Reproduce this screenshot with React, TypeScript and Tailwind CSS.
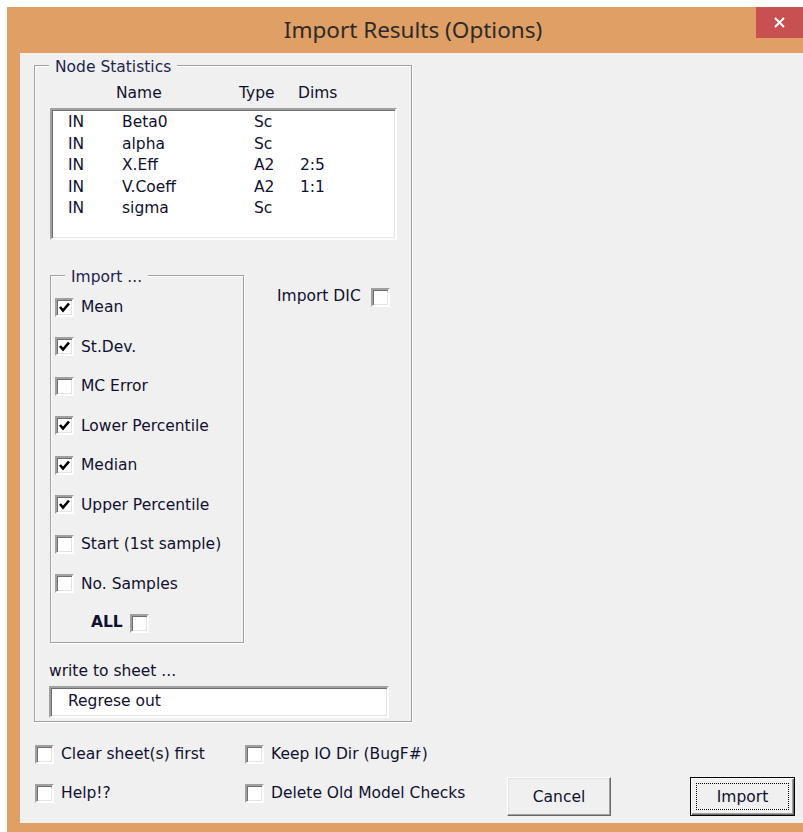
import type { ReactNode } from 'react';

type Node = { io: string; name: string; type: string; dims: string };

const nodes: Node[] = [
  { io: 'IN', name: 'Beta0', type: 'Sc', dims: '' },
  { io: 'IN', name: 'alpha', type: 'Sc', dims: '' },
  { io: 'IN', name: 'X.Eff', type: 'A2', dims: '2:5' },
  { io: 'IN', name: 'V.Coeff', type: 'A2', dims: '1:1' },
  { io: 'IN', name: 'sigma', type: 'Sc', dims: '' },
];

const importOptions: { label: string; checked: boolean }[] = [
  { label: 'Mean', checked: true },
  { label: 'St.Dev.', checked: true },
  { label: 'MC Error', checked: false },
  { label: 'Lower Percentile', checked: true },
  { label: 'Median', checked: true },
  { label: 'Upper Percentile', checked: true },
  { label: 'Start (1st sample)', checked: false },
  { label: 'No. Samples', checked: false },
];

function Box({ checked = false }: { checked?: boolean }) {
  return (
    <span className="flex h-[19px] w-[19px] shrink-0 items-center justify-center border-2 border-t-[#a0a0a0] border-l-[#a0a0a0] border-b-white border-r-white bg-white shadow-[inset_1px_1px_0_#6e6e6e,inset_-1px_-1px_0_#e3e3e3]">
      {checked && (
        <svg width="13" height="13" viewBox="0 0 13 13">
          <path d="M2 6 L5 9.5 L11 2.5" fill="none" stroke="#000" strokeWidth="2.6" />
        </svg>
      )}
    </span>
  );
}

function Check({ label, checked }: { label: string; checked?: boolean }) {
  return (
    <div className="flex h-[20px] items-center gap-[7px]">
      <Box checked={checked} />
      <span className="leading-[20px]">{label}</span>
    </div>
  );
}

function Group({ title, className, children }: { title: string; className: string; children: ReactNode }) {
  return (
    <div className={`relative border border-[#a0a0a0] shadow-[1px_1px_0_#fff,inset_1px_1px_0_#fff] ${className}`}>
      <span className="absolute -top-[9px] left-[14px] bg-[#f0f0f0] px-[6px] leading-[20px] text-[#1d2450]">
        {title}
      </span>
      {children}
    </div>
  );
}

function Button({ children, primary }: { children: ReactNode; primary?: boolean }) {
  return (
    <button
      className={`flex h-[39px] items-center justify-center bg-[#f0f0f0] pt-[2px] ${
        primary
          ? 'w-[105px] border border-black shadow-[inset_1px_1px_0_#fff,inset_-1px_-1px_0_#696969,inset_-2px_-2px_0_#a0a0a0]'
          : 'w-[104px] border border-t-white border-l-white border-b-[#696969] border-r-[#696969] shadow-[inset_-1px_-1px_0_#a0a0a0,inset_1px_1px_0_#e3e3e3]'
      }`}
    >
      {primary ? (
        <span className="-mt-[2px] flex h-[27px] w-[93px] items-center justify-center border border-dotted border-black pt-[2px]">
          {children}
        </span>
      ) : (
        children
      )}
    </button>
  );
}

export default function App() {
  return (
    <div className="h-[832px] w-[803px] overflow-hidden bg-white pl-[7px] pt-[7px]">
      <div className="flex h-[825px] flex-col bg-[#e09f65]">
        {/* title bar */}
        <div className="relative flex h-[46px] shrink-0 items-center justify-center pl-[16px]">
          <span className="font-['Noto_Sans',sans-serif] text-[22.5px] text-[#2b2b2b]">
            Import Results (Options)
          </span>
          <div className="absolute right-0 top-0 flex h-[31px] w-[47px] items-center justify-center bg-[#c75050]">
            <svg width="11" height="11" viewBox="0 0 11 11">
              <path d="M1 1 L10 10 M10 1 L1 10" stroke="#fff" strokeWidth="2" />
            </svg>
          </div>
        </div>

        {/* client area */}
        <div className="mb-[9px] ml-[13px] flex-1 bg-[#f0f0f0] font-['DejaVu_Sans',sans-serif] text-[15.5px] text-[#101030]">
          <Group title="Node Statistics" className="ml-[14px] mt-[12px] h-[657px] w-[378px]">
            <div className="ml-[81px] mt-[17px] flex h-[20px] leading-[20px]">
              <span className="w-[123px]">Name</span>
              <span className="w-[59px]">Type</span>
              <span>Dims</span>
            </div>

            <div className="ml-[15px] mt-[5px] h-[132px] w-[347px] border-2 border-t-[#a0a0a0] border-l-[#a0a0a0] border-b-white border-r-white bg-white pt-[2px] shadow-[inset_1px_1px_0_#6e6e6e,inset_-1px_-1px_0_#e3e3e3]">
              {nodes.map((n) => (
                <div key={n.name} className="flex h-[21.5px] items-center">
                  <span className="ml-[16px] w-[54px]">{n.io}</span>
                  <span className="w-[132px]">{n.name}</span>
                  <span className="w-[46px]">{n.type}</span>
                  <span>{n.dims}</span>
                </div>
              ))}
            </div>

            <div className="mt-[35px] flex items-start">
              <Group title="Import ..." className="ml-[15px] h-[368px] w-[194px]">
                <div className="ml-[4px] mt-[21px] flex flex-col gap-[19.5px]">
                  {importOptions.map((o) => (
                    <Check key={o.label} label={o.label} checked={o.checked} />
                  ))}
                  <div className="ml-[36px] flex h-[20px] items-center gap-[7px]">
                    <span className="font-bold">ALL</span>
                    <Box />
                  </div>
                </div>
              </Group>
              <div className="ml-[33px] mt-[12px] flex h-[20px] items-center gap-[10px]">
                <span>Import DIC</span>
                <Box />
              </div>
            </div>

            <div className="ml-[14px] mt-[18px] leading-[20px]">write to sheet ...</div>
            <div className="ml-[14px] mt-[5px] flex h-[32px] w-[340px] items-center border-2 border-t-[#a0a0a0] border-l-[#a0a0a0] border-b-white border-r-white bg-white pl-[17px] shadow-[inset_1px_1px_0_#6e6e6e,inset_-1px_-1px_0_#e3e3e3]">
              Regrese out
            </div>
          </Group>

          <div className="mt-[22px] flex items-start">
            <div className="ml-[15px] grid w-[472px] grid-cols-[210px_1fr] gap-y-[19px]">
              <Check label="Clear sheet(s) first" />
              <Check label="Keep IO Dir (BugF#)" />
              <Check label="Help!?" />
              <Check label="Delete Old Model Checks" />
            </div>
            <div className="mt-[33px] flex gap-[79px]">
              <Button>Cancel</Button>
              <Button primary>Import</Button>
            </div>
          </div>
        </div>
      </div>
    </div>
  );
}
